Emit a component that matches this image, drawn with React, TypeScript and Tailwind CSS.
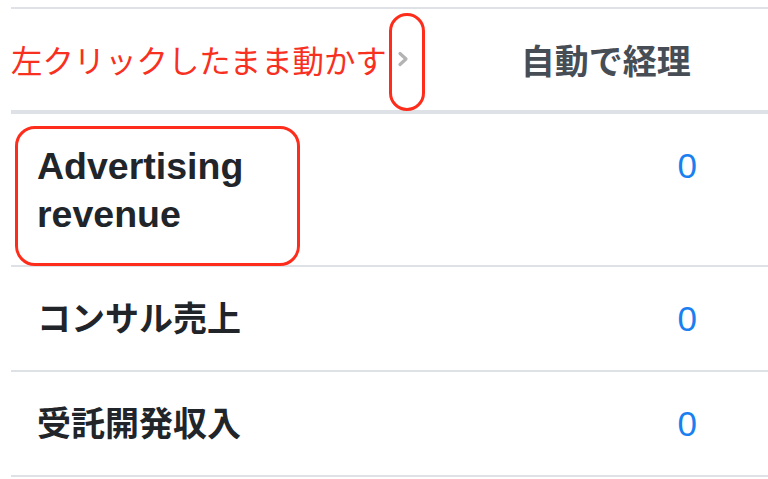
const rows = [
  { label: "Advertising revenue", value: "0", marked: true },
  { label: "コンサル売上", value: "0" },
  { label: "受託開発収入", value: "0" },
];

const jp = { fontFamily: '"Liberation Sans", "Noto Sans CJK JP", sans-serif' };

export default function App() {
  return (
    <div className="w-[768px] h-[479px] bg-white overflow-hidden" style={jp}>
      <div className="ml-[11px] mt-[7px] border-t-2 border-[#dee2e6]">
        {/* header */}
        <div className="relative flex items-center h-[105px] border-b-4 border-[#dee2e6]">
          <span className="text-[31.4px] leading-none text-[#f7301f] whitespace-nowrap" style={{ fontFamily: '"Noto Sans CJK JP", sans-serif' }}>
            左クリックしたまま動かす
          </span>
          <svg width="12" height="16" viewBox="0 0 12 16" className="ml-[10px] -mt-[1px]">
            <path d="M3 2.5 L9 8 L3 13.5" fill="none" stroke="#b3b3b3" strokeWidth="3.2" strokeLinecap="round" strokeLinejoin="round" />
          </svg>
          <div className="absolute left-[378px] top-[4px] w-[36px] h-[98px] rounded-[18px] border-[3px] border-[#fe2c1b]" />
          <span className="ml-[112px] text-[34px] font-bold leading-none text-[#474d55] whitespace-nowrap" style={{ fontFamily: '"Noto Sans CJK JP", sans-serif' }}>
            自動で経理
          </span>
        </div>
        {/* rows */}
        {rows.map((r) => (
          <div key={r.label} className="relative flex items-start pt-[28px] pb-[27px] border-b-2 border-[#dee2e6]">
            <div className="flex-1 pl-[26px]">
              <div className={r.marked ? "w-[240px] text-[37.5px] font-bold leading-[48px] text-[#212529]" : "w-[240px] text-[34px] font-bold leading-[48px] text-[#212529]"}>
                {r.label}
              </div>
            </div>
            <div className="pr-[71px] text-[35px] leading-[48px] text-[#1a7ff0]">{r.value}</div>
            {r.marked && (
              <div className="absolute left-[4px] top-[12px] w-[285px] h-[140px] rounded-[20px] border-[3px] border-[#fe2c1b]" />
            )}
          </div>
        ))}
      </div>
    </div>
  );
}
